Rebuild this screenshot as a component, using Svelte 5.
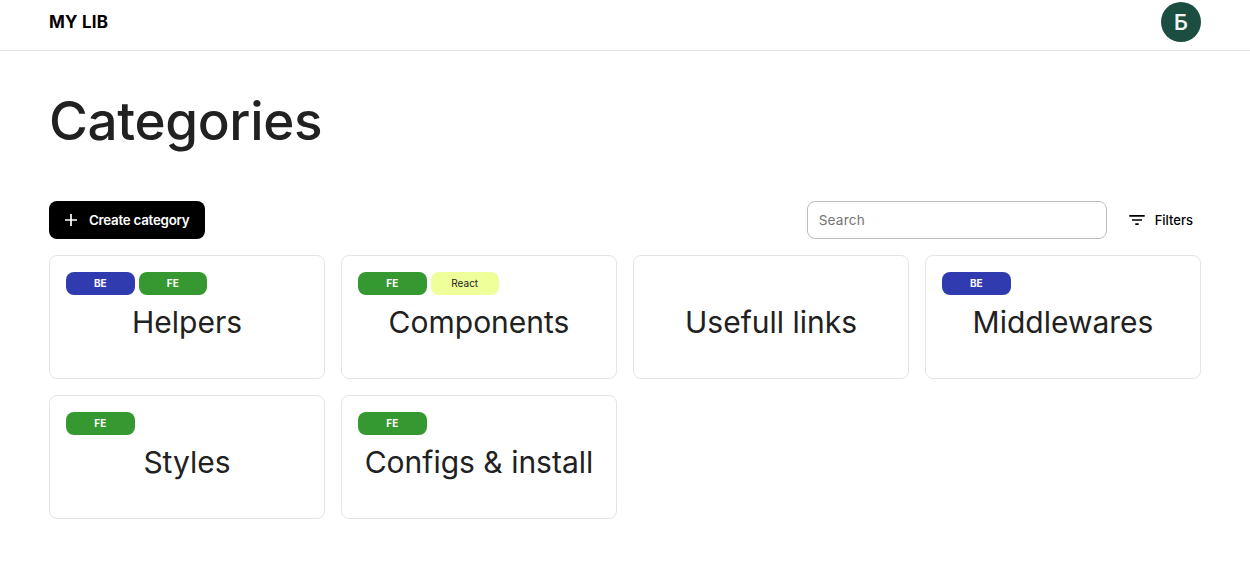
<script>
  const categories = [
    { name: 'Helpers', tags: ['BE', 'FE'] },
    { name: 'Components', tags: ['FE', 'React'] },
    { name: 'Usefull links', tags: [] },
    { name: 'Middlewares', tags: ['BE'] },
    { name: 'Styles', tags: ['FE'] },
    { name: 'Configs & install', tags: ['FE'] }
  ];
</script>

<header>
  <span class="brand">MY LIB</span>
  <div class="avatar">Б</div>
</header>

<main>
  <h1>Categories</h1>

  <div class="toolbar">
    <button class="create">
      <svg width="14" height="14" viewBox="0 0 14 14" fill="none" stroke="currentColor" stroke-width="1.7">
        <path d="M1 7H13M7 1V13" />
      </svg>
      <span>Create category</span>
    </button>
    <div class="tools">
      <input type="text" placeholder="Search" />
      <button class="filters">
        <svg width="16" height="16" viewBox="0 0 16 16" fill="currentColor">
          <path d="M0.3 3h15.4v1.7H0.3zM3 7.2h10v1.6H3zM6.3 11.3h3.4v1.7H6.3z" />
        </svg>
        <span>Filters</span>
      </button>
    </div>
  </div>

  <section class="grid">
    {#each categories as category}
      <article class="card">
        <div class="tags">
          {#each category.tags as tag}
            <span class="tag {tag.toLowerCase()}">{tag}</span>
          {/each}
        </div>
        <h2>{category.name}</h2>
      </article>
    {/each}
  </section>
</main>

<style>
  :global(body) {
    background: #fff;
    color: #212121;
    font-family: Inter, sans-serif;
  }

  header {
    box-sizing: border-box;
    height: 51px;
    padding: 2px 49px 0;
    display: flex;
    justify-content: space-between;
    align-items: flex-start;
    border-bottom: 1px solid #e4e4e7;
  }

  .brand {
    color: #000;
    font-size: 17px;
    font-weight: 700;
    line-height: 40px;
    letter-spacing: 0.2px;
  }

  .avatar {
    width: 40px;
    height: 40px;
    border-radius: 50%;
    background: #1b4d40;
    color: #f0f4f3;
    font-family: Roboto, sans-serif;
    font-size: 22px;
    font-weight: 500;
    line-height: 41px;
    text-align: center;
  }

  main {
    padding: 38px 49px 0;
  }

  h1 {
    margin: 0;
    font-size: 53px;
    font-weight: 500;
    line-height: 64px;
    letter-spacing: -0.35px;
  }

  .toolbar {
    margin-top: 48px;
    display: flex;
    justify-content: space-between;
  }

  button {
    box-sizing: border-box;
    height: 38px;
    border: 0;
    display: flex;
    align-items: center;
    font-family: inherit;
    font-size: 13px;
  }

  .create {
    width: 156px;
    padding: 0 15px;
    gap: 11px;
    border-radius: 8px;
    background: #000;
    color: #fff;
    font-size: 13.33px;
    font-weight: 600;
    letter-spacing: -0.25px;
    white-space: nowrap;
  }

  .tools {
    display: flex;
    gap: 14px;
  }

  input {
    box-sizing: border-box;
    width: 300px;
    height: 38px;
    padding: 0 11px 1px;
    border: 1px solid #bdbdbd;
    border-radius: 8px;
    font-family: inherit;
    font-size: 13.6px;
    letter-spacing: 0.2px;
  }

  input::placeholder {
    color: #757575;
  }

  .filters {
    padding: 0 8px;
    gap: 10px;
    background: transparent;
    color: #000;
    font-weight: 500;
  }

  .grid {
    margin-top: 16px;
    display: grid;
    grid-template-columns: repeat(4, 1fr);
    gap: 16px;
  }

  .card {
    box-sizing: border-box;
    height: 124px;
    padding: 16px;
    border: 1px solid #e4e4e7;
    border-radius: 8px;
  }

  .tags {
    display: flex;
    gap: 4px;
    height: 23px;
  }

  .tag {
    width: 68.5px;
    border-radius: 8px;
    font-size: 10px;
    font-weight: 700;
    line-height: 23px;
    text-align: center;
  }

  .be {
    background: #303bb0;
    color: #fff;
  }

  .fe {
    background: #359830;
    color: #fff;
  }

  .react {
    background: #efff99;
    color: #212121;
    font-weight: 400;
  }

  h2 {
    margin: 9px -10px 0;
    font-size: 30px;
    font-weight: 400;
    line-height: 36px;
    text-align: center;
    white-space: nowrap;
  }
</style>
